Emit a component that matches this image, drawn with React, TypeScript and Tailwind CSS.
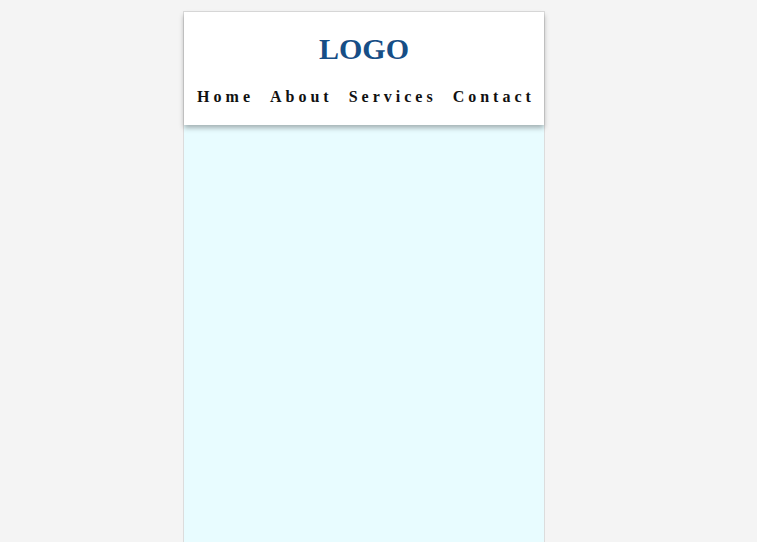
export default function App() {
  const links = ["Home", "About", "Services", "Contact"];
  return (
    <div className="min-h-[542px] bg-[#f4f4f4] pt-[11px] pl-[183px]" style={{ fontFamily: '"Liberation Serif", "Times New Roman", serif' }}>
      <div className="w-[362px] border border-[#dcdcdc] bg-[#e8fcff]">
        <header className="relative z-10 bg-white pt-[20px] pb-[19px] shadow-[0_3px_5px_rgba(0,0,0,0.3)]">
          <div className="text-center text-[30px] font-bold leading-[33px] text-[#164e86]">LOGO</div>
          <nav className="mt-[23px] flex justify-center gap-[16px] pl-[4px] text-[16px] font-bold leading-[18px] tracking-[4px] text-[#111]">
            {links.map((l) => (
              <a key={l} href="#">{l}</a>
            ))}
          </nav>
        </header>
        <div className="h-[500px]" />
      </div>
    </div>
  );
}
